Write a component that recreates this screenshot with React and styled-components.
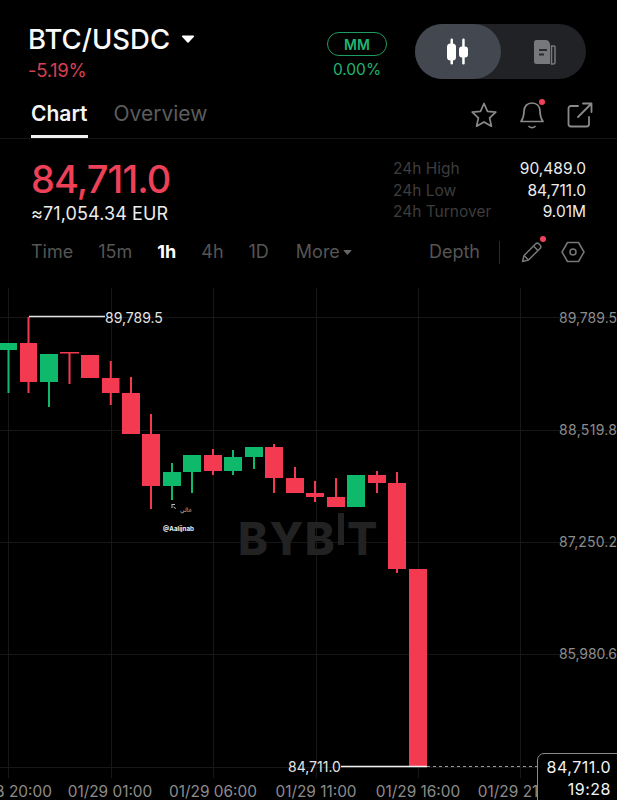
import React from "react";
import styled, { createGlobalStyle } from "styled-components";

const Global = createGlobalStyle`
  html, body { margin: 0; padding: 0; background: #000; }
  * { box-sizing: border-box; }
`;

const Page = styled.div`
  width: 617px; height: 800px; background: #000; overflow: hidden; position: relative;
  font-family: Inter, "Noto Sans", sans-serif; color: #fff;
`;
const Header = styled.header`
  height: 100px; display: flex; align-items: flex-start; padding: 24px 31px 0 28px;
`;
const PairBlock = styled.div`flex: 1; display: flex; flex-direction: column;`;
const PairRow = styled.div`display: flex; align-items: center; gap: 11px; height: 30px;`;
const Pair = styled.h1`margin: 0; font-size: 27.5px; line-height: 30px; font-weight: 500; letter-spacing: 0; color: #fafafa;`;
const Change = styled.div`margin-top: 4px; font-size: 18.5px; line-height: 24px; color: #d83f52; letter-spacing: -0.3px;`;
const MmBlock = styled.div`width: 60px; margin: 8px 28px 0 0; display: flex; flex-direction: column; align-items: center;`;
const MmBadge = styled.div`
  width: 60px; height: 24px; border: 1px solid #1d9c63; border-radius: 12px;
  font-size: 14px; font-weight: 600; color: #1fb673; display: flex; align-items: center; justify-content: center;
`;
const MmValue = styled.div`margin-top: 3px; font-size: 15.5px; line-height: 22px; color: #1fb673;`;
const Toggle = styled.div`width: 171px; height: 55px; border-radius: 28px; background: #202226; display: flex;`;
const ToggleSeg = styled.div`
  width: ${p => p.$active ? 86 : 85}px; height: 55px; border-radius: 28px;
  background: ${p => p.$active ? "#43474f" : "transparent"};
  display: flex; align-items: center; justify-content: center;
`;
const Tabs = styled.nav`
  height: 39px; display: flex; align-items: flex-start; padding: 0 22px 0 31px;
  border-bottom: 1px solid #161616; position: relative;
`;
const Tab = styled.div`
  height: 38px; margin-right: ${p => p.$gap || 0}px; font-size: 21px; line-height: 28px;
  font-weight: ${p => p.$active ? 600 : 400}; color: ${p => p.$active ? "#f5f5f5" : "#5c5c5c"};
  border-bottom: 3px solid ${p => p.$active ? "#f0f0f0" : "transparent"};
`;
const TabIcons = styled.div`margin-left: auto; display: flex; align-items: center; gap: 18px; height: 30px;`;
const IconSlot = styled.div`position: relative; width: 30px; height: 30px; display: flex; align-items: center; justify-content: center;`;
const Dot = styled.span`
  position: absolute; width: 6px; height: 6px; border-radius: 50%; background: #f0435a;
  top: ${p => p.$top}px; right: ${p => p.$right}px;
`;
const PriceSection = styled.section`height: 93px; display: flex; padding: 17px 31px 0 31px; justify-content: space-between;`;
const PriceCol = styled.div`display: flex; flex-direction: column;`;
const Price = styled.div`font-size: 38px; line-height: 46px; font-weight: 500; color: #ec4157; letter-spacing: -0.9px;`;
const Fiat = styled.div`margin-top: 1px; font-size: 18px; line-height: 22px; color: #ececec; letter-spacing: 0.1px;`;
const Stats = styled.div`width: 193px; display: grid; grid-template-columns: 1fr auto; grid-auto-rows: 21.5px; margin-top: 2px;`;
const StatLabel = styled.div`font-size: 15.5px; line-height: 21.5px; color: #3d3d3d;`;
const StatValue = styled.div`font-size: 15.5px; line-height: 21.5px; color: #ececec; text-align: right;`;
const Timebar = styled.div`height: 40px; margin-bottom: 16px; display: flex; align-items: center; padding: 0 29px 0 31px;`;
const Tf = styled.div`
  margin-right: ${p => p.$gap}px; font-size: 18px; line-height: 24px;
  font-weight: ${p => p.$active ? 700 : 400}; color: ${p => p.$active ? "#fff" : "#555"};
  display: flex; align-items: center; gap: 3px;
`;
const Depth = styled.div`margin-left: auto; font-size: 18px; line-height: 24px; color: #555;`;
const Divider = styled.div`width: 1px; height: 23px; background: #2a2a2a; margin: 0 17px 0 19px;`;
const ToolIcons = styled.div`display: flex; align-items: center; gap: 11px;`;
const ChartWrap = styled.div`position: relative; height: 512px;`;
const ChartSvg = styled.svg`display: block; width: 617px; height: 512px;`;
const PriceTag = styled.div`
  position: absolute; left: 537px; top: 465px; width: 90px; height: 50px; background: #000;
  border: 1px solid #8a8a8a; border-radius: 7px 0 0 0; padding: 3px 15px 0 0; text-align: right;
  font-size: 16px; line-height: 21.5px; color: #f4f4f4; letter-spacing: 0.5px;
`;

const G = "#0fb96b", R = "#f43a50";
const candles = [
  [0, 17, 343, 350, 350, 393, G],
  [20, 37, 343, 382, 317, 393, R],
  [40, 58, 354, 382, 354, 407, G],
  [60, 79, 352, 353.5, 352, 384, R],
  [81, 99, 355, 378, 355, 378, R],
  [102, 119.5, 378, 393, 361, 405, R],
  [122, 140, 393, 434, 377, 434, R],
  [142, 160, 434, 486, 414, 509, R],
  [163, 181, 472, 486, 463, 500, G],
  [183, 201, 455, 472, 455, 493, G],
  [204, 222, 455, 471, 449, 475, R],
  [224, 242, 457, 471, 450, 475, G],
  [245, 263, 447, 457, 447, 469, G],
  [265, 283, 447, 478, 444, 493, R],
  [286, 304, 478, 493, 467, 493, R],
  [306, 324, 493, 497, 481, 502, R],
  [327, 345, 497, 507, 478, 507, R],
  [347, 365, 475, 507, 475, 507, G],
  [368, 386, 475, 483, 471, 493, R],
  [388, 406, 483, 569, 472, 573, R],
  [409, 427, 569, 766, 569, 766, R],
];
const vLines = [8, 111, 213, 316, 418, 520];
const hLines = [317, 430, 542, 654, 767];
const axis = [["89,789.5", 318], ["88,519.8", 430], ["87,250.2", 542], ["85,980.6", 654]];
const times = [["01/28 20:00", 8], ["01/29 01:00", 110], ["01/29 06:00", 213], ["01/29 11:00", 316], ["01/29 16:00", 418], ["01/29 21:00", 520]];

const FONT = 'Inter, "Noto Sans", sans-serif';

const Chart = () => (
  <ChartSvg viewBox="0 288 617 512">
    {vLines.map(x => <line key={x} x1={x + .5} x2={x + .5} y1="288" y2="778" stroke="#171717" />)}
    {hLines.map(y => <line key={y} x1="0" x2="617" y1={y + .5} y2={y + .5} stroke="#171717" />)}

    <g fontFamily={FONT} fontWeight="800" fontSize="45" fill="#222">
      <text x="238" y="555" letterSpacing="1.5">BYB</text>
      <rect x="338" y="513" width="6" height="32" />
      <text x="347" y="555">T</text>
    </g>

    {candles.map(([x1, x2, t, b, wt, wb, c], i) => {
      const mid = (x1 + x2) / 2;
      return (
        <g key={i} fill={c}>
          <rect x={mid - 1} y={wt} width="2" height={wb - wt} />
          <rect x={x1} y={t} width={x2 - x1} height={b - t} />
        </g>
      );
    })}

    <line x1="29" x2="105" y1="316.5" y2="316.5" stroke="#e0e0e0" strokeWidth="1.5" />
    <text x="105" y="323" fontFamily={FONT} fontSize="14" fill="#e6e6e6">89,789.5</text>

    <g fontFamily={FONT} fontSize="14" fill="#8c8c8c">
      {axis.map(([t, y]) => <text key={t} x="559" y={y + 5} textLength="58">{t}</text>)}
    </g>
    <g fontFamily={FONT} fontSize="15.4" fill="#8c8c8c" textAnchor="middle">
      {times.map(([t, x]) => <text key={t} x={x} y="797">{t}</text>)}
    </g>

    <text x="288" y="772" fontFamily={FONT} fontSize="14" fill="#e6e6e6">84,711.0</text>
    <line x1="341" x2="427" y1="766.5" y2="766.5" stroke="#f2f2f2" strokeWidth="1.5" />
    <line x1="427" x2="537" y1="766.5" y2="766.5" stroke="#9a9a9a" strokeDasharray="3 3" />

    <g fill="#bdbdbd">
      <path d="M171.500 504h3.500v1h-2.500v3h-1zM174 506.500l2 2-.7.5-2-2z" />
      <text x="180" y="512" fontFamily='"DejaVu Sans", sans-serif' fontSize="6">عالي</text>
      <text x="163" y="531" fontFamily={FONT} fontSize="6.2" fontWeight="700" fill="#f0f0f0">@Aalijnab</text>
    </g>
  </ChartSvg>
);

const CandleIcon = () => (
  <svg width="24" height="30" viewBox="0 0 24 30" fill="#fff">
    <rect x="4.500" y="1.500" width="2.500" height="26" rx="1.200" />
    <rect x="1" y="6.500" width="9" height="17" rx="3.500" />
    <rect x="16.200" y="1.500" width="2.500" height="26" rx="1.200" />
    <rect x="13" y="9.500" width="9" height="11" rx="3" />
  </svg>
);
const DocIcon = () => (
  <svg width="26" height="26" viewBox="0 0 26 26">
    <path d="M3 3.5A2.5 2.5 0 0 1 5.500 1h9A4.500 4.500 0 0 1 19 5.500V25H5.500A2.500 2.500 0 0 1 3 22.500z" fill="#77787c" />
    <path d="M20.500 7H23a1 1 0 0 1 1 1v15.500a1.500 1.500 0 0 1-1.500 1.500h-2z" fill="none" stroke="#77787c" strokeWidth="1.500" />
    <rect x="8" y="10" width="8" height="2" fill="#2a2b2f" />
    <rect x="8" y="14.500" width="5" height="2" fill="#2a2b2f" />
  </svg>
);
const Caret = ({ size = 14, color = "#fff" }) => (
  <svg width={size} height={size * .7} viewBox="0 0 14 10"><path d="M1.500 1.500h11a.8.8 0 0 1 .6 1.300L7.600 8.700a.8.8 0 0 1-1.200 0L.9 2.800a.8.8 0 0 1 .6-1.300z" fill={color} /></svg>
);
const Star = () => (
  <svg width="28" height="28" viewBox="0 0 28 28" fill="none" stroke="#8a8a8a" strokeWidth="1.700" strokeLinejoin="round">
    <path d="M14 2.500l3.500 7.800 8.300.9-6.200 5.700 1.800 8.300L14 20.900l-7.400 4.300 1.800-8.300-6.200-5.700 8.300-.9z" />
  </svg>
);
const Bell = () => (
  <svg width="28" height="30" viewBox="0 0 28 30" fill="none" stroke="#8a8a8a" strokeWidth="1.700" strokeLinecap="round" strokeLinejoin="round">
    <path d="M14 3c-5 0-8 3.500-8 8.500 0 5-1.200 7.500-3 10h22c-1.800-2.500-3-5-3-10C22 6.500 19 3 14 3z" />
    <path d="M11 26.500c1.500 1.500 4.500 1.500 6 0" />
  </svg>
);
const Share = () => (
  <svg width="28" height="28" viewBox="0 0 28 28" fill="none" stroke="#8a8a8a" strokeWidth="1.800" strokeLinecap="round" strokeLinejoin="round">
    <path d="M12 5H5a2.500 2.500 0 0 0-2.500 2.500V23A2.500 2.500 0 0 0 5 25.500h15.500A2.500 2.500 0 0 0 23 23v-7" />
    <path d="M12 16L25.500 2.500M17 2.500h8.500V11" />
  </svg>
);
const Pencil = () => (
  <svg width="22" height="22" viewBox="0 0 22 22" fill="none" stroke="#777" strokeWidth="1.500" strokeLinejoin="round">
    <path d="M1.500 20.500l1.500-6L14.500 3a2.500 2.500 0 0 1 3.500 0l1 1a2.500 2.500 0 0 1 0 3.500L7.500 19z" />
    <path d="M12.500 5l4.500 4.500M3 14.500L7.500 19" />
  </svg>
);
const Hex = () => (
  <svg width="24" height="22" viewBox="0 0 24 22" fill="none" stroke="#777" strokeWidth="1.500" strokeLinejoin="round">
    <path d="M6.500 1.500h11L23 11l-5.500 9.500h-11L1 11z" />
    <circle cx="12" cy="11" r="3" />
  </svg>
);

export default function App() {
  return (
    <Page>
      <Global />
      <Header>
        <PairBlock>
          <PairRow><Pair>BTC/USDC</Pair><Caret /></PairRow>
          <Change>-5.19%</Change>
        </PairBlock>
        <MmBlock><MmBadge>MM</MmBadge><MmValue>0.00%</MmValue></MmBlock>
        <Toggle>
          <ToggleSeg $active><CandleIcon /></ToggleSeg>
          <ToggleSeg><DocIcon /></ToggleSeg>
        </Toggle>
      </Header>
      <Tabs>
        <Tab $active $gap={26}>Chart</Tab>
        <Tab>Overview</Tab>
        <TabIcons>
          <IconSlot><Star /></IconSlot>
          <IconSlot><Bell /><Dot $top={-1} $right={2} /></IconSlot>
          <IconSlot><Share /></IconSlot>
        </TabIcons>
      </Tabs>
      <PriceSection>
        <PriceCol>
          <Price>84,711.0</Price>
          <Fiat>≈71,054.34 EUR</Fiat>
        </PriceCol>
        <Stats>
          <StatLabel>24h High</StatLabel><StatValue>90,489.0</StatValue>
          <StatLabel>24h Low</StatLabel><StatValue>84,711.0</StatValue>
          <StatLabel>24h Turnover</StatLabel><StatValue>9.01M</StatValue>
        </Stats>
      </PriceSection>
      <Timebar>
        <Tf $gap={25}>Time</Tf>
        <Tf $gap={25}>15m</Tf>
        <Tf $gap={25} $active>1h</Tf>
        <Tf $gap={25}>4h</Tf>
        <Tf $gap={27}>1D</Tf>
        <Tf $gap={0}>More<Caret size={9} color="#666" /></Tf>
        <Depth>Depth</Depth>
        <Divider />
        <ToolIcons>
          <IconSlot><Pencil /><Dot $top={-1} $right={1} /></IconSlot>
          <IconSlot><Hex /></IconSlot>
        </ToolIcons>
      </Timebar>
      <ChartWrap>
        <Chart />
        <PriceTag>84,711.0<br />19:28</PriceTag>
      </ChartWrap>
    </Page>
  );
}
